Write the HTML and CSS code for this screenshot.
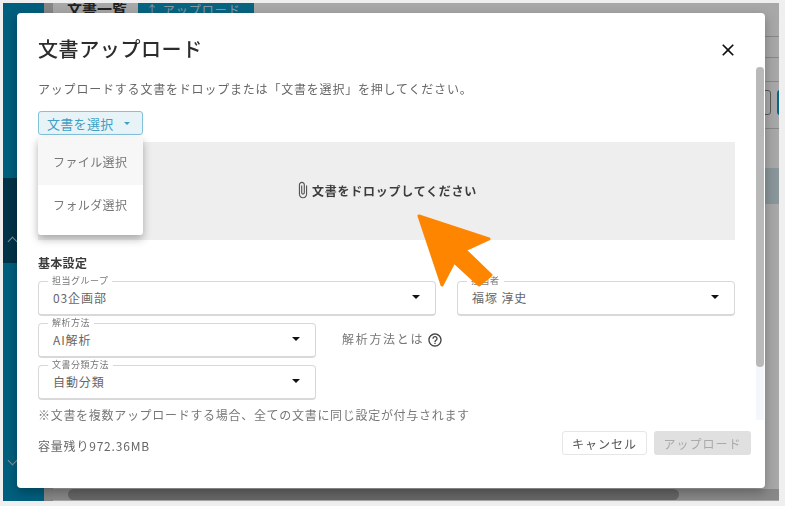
FILE: index.html
```html
<!DOCTYPE html>
<html lang="ja">
<head>
<meta charset="utf-8">
<title>文書アップロード</title>
<link rel="stylesheet" href="styles.css">
</head>
<body>
<div class="shot">
  <div class="app">
    <aside class="side">
      <div class="side-top"></div>
      <div class="side-dark"><span class="chev chev-up"></span></div>
      <div class="side-rest"><span class="chev chev-down"></span></div>
    </aside>
    <div class="rail"></div>
    <main class="main">
      <div class="page-head">
        <span class="page-title">文書一覧</span>
        <span class="page-btn">↑ アップロード</span>
      </div>
      <div class="page-lines">
        <div class="line line-a"></div>
        <div class="line line-b"></div>
        <div class="line line-c"></div>
        <div class="line line-d">
          <span class="mini mini-a"></span>
          <span class="mini mini-b"></span>
        </div>
        <div class="row-hi"></div>
      </div>
      <div class="page-scroll"><div class="page-thumb"></div></div>
    </main>
  </div>
  <div class="overlay"></div>

  <section class="dialog">
    <div class="dialog-scroll"><div class="dialog-thumb"></div></div>
    <header class="dialog-head">
      <h1 class="dialog-title">文書アップロード</h1>
      <svg class="close" viewBox="0 0 24 24"><path d="M19 6.41L17.59 5 12 10.59 6.41 5 5 6.41 10.59 12 5 17.59 6.41 19 12 13.41 17.59 19 19 17.59 13.41 12z"/></svg>
    </header>
    <div class="dialog-body">
      <p class="desc">アップロードする文書をドロップまたは「文書を選択」を押してください。</p>
      <div class="picker">
        <button class="pick-btn">文書を選択<span class="caret caret-blue"></span></button>
        <ul class="menu">
          <li class="menu-item menu-item-hover">ファイル選択</li>
          <li class="menu-item">フォルダ選択</li>
        </ul>
      </div>
      <div class="drop">
        <svg class="clip" viewBox="6 0 13 24"><path d="M16.5 6v11.5c0 2.21-1.79 4-4 4s-4-1.79-4-4V5c0-1.38 1.12-2.5 2.5-2.5s2.5 1.12 2.5 2.5v10.5c0 .55-.45 1-1 1s-1-.45-1-1V6H10v9.5c0 1.38 1.12 2.5 2.5 2.5s2.5-1.12 2.5-2.5V5c0-2.21-1.79-4-4-4S7 2.79 7 5v12.5c0 3.04 2.46 5.5 5.5 5.5s5.5-2.46 5.5-5.5V6h-1.5z"/></svg>
        <span class="drop-text">文書をドロップしてください</span>
      </div>
      <h2 class="section">基本設定</h2>
      <div class="fields">
        <div class="field-row">
          <div class="field field-group"><span class="field-label">担当グループ</span><span class="field-value">03企画部</span><span class="caret"></span></div>
          <div class="field field-owner"><span class="field-label">担当者</span><span class="field-value">福塚 淳史</span><span class="caret"></span></div>
        </div>
        <div class="field-row">
          <div class="field field-half"><span class="field-label">解析方法</span><span class="field-value">AI解析</span><span class="caret"></span></div>
          <div class="help">
            <span class="help-text">解析方法とは</span>
            <svg class="help-icon" viewBox="0 0 24 24"><path d="M11 18h2v-2h-2v2zm1-16C6.48 2 2 6.48 2 12s4.48 10 10 10 10-4.48 10-10S17.52 2 12 2zm0 18c-4.41 0-8-3.59-8-8s3.59-8 8-8 8 3.59 8 8-3.59 8-8 8zm0-14c-2.21 0-4 1.79-4 4h2c0-1.1.9-2 2-2s2 .9 2 2c0 2-3 1.75-3 5h2c0-2.25 3-2.5 3-5 0-2.21-1.79-4-4-4z"/></svg>
          </div>
        </div>
        <div class="field-row">
          <div class="field field-half"><span class="field-label">文書分類方法</span><span class="field-value">自動分類</span><span class="caret"></span></div>
        </div>
      </div>
      <p class="note">※文書を複数アップロードする場合、全ての文書に同じ設定が付与されます</p>
    </div>
    <footer class="dialog-foot">
      <span class="capacity">容量残り972.36MB</span>
      <div class="actions">
        <button class="btn btn-cancel">キャンセル</button>
        <button class="btn btn-upload">アップロード</button>
      </div>
    </footer>
  </section>

  <svg class="arrow" viewBox="0 0 785 506"><polygon points="419,216 489,239 465,250 491,275 479,285 454,262 442,285"/></svg>
</div>
</body>
</html>
```
FILE: styles.css
```css
* { box-sizing: border-box; }
html, body { margin: 0; padding: 0; }
body {
  width: 785px;
  height: 506px;
  overflow: hidden;
  background: #efefef;
  font-family: "Noto Sans CJK JP", "Noto Sans", sans-serif;
  color: #555;
}
.shot {
  position: relative;
  width: 785px;
  height: 506px;
  padding: 3px 6px 5px 3px;
  filter: blur(0.6px);
}
.app {
  display: flex;
  height: 100%;
  background: #fff;
  overflow: hidden;
}
.side {
  width: 41px;
  display: flex;
  flex-direction: column;
  background: #0091bf;
}
.side-top { height: 175px; }
.side-dark {
  height: 85px;
  background: #004e70;
  display: flex;
  align-items: flex-end;
  padding: 0 0 18px;
}
.side-rest {
  flex: 1;
  padding-top: 194px;
}
.chev {
  display: block;
  width: 7px;
  height: 7px;
  margin-left: 6px;
  transform: rotate(45deg);
  border-color: #c9dde4;
  border-style: solid;
  border-width: 0;
}
.chev-up { border-top-width: 1.5px; border-left-width: 1.5px; }
.chev-down { border-bottom-width: 1.5px; border-right-width: 1.5px; }
.rail { width: 9px; background: #cecece; }
.main {
  flex: 1;
  display: flex;
  flex-direction: column;
  min-width: 0;
}
.page-head {
  height: 33px;
  display: flex;
  gap: 8px;
  padding: 0 0 0 14px;
  align-items: flex-start;
}
.page-title {
  font-size: 15px;
  font-weight: 700;
  line-height: 20px;
  color: #333;
  width: 63px;
  margin-top: -4px;
}
.page-btn {
  width: 116px;
  height: 22px;
  margin-top: -4px;
  padding: 2px 0 0 8px;
  background: #0d9ac6;
  color: #cdeaf4;
  font-size: 12px;
  letter-spacing: 1px;
}
.page-lines {
  flex: 1;
  position: relative;
  display: flex;
  flex-direction: column;
}
.line { border-bottom: 1px solid #cfcfcf; }
.line-a { height: 1px; }
.line-b { height: 21px; }
.line-c { height: 24px; }
.line-d {
  height: 47px;
  display: flex;
  gap: 6px;
  justify-content: flex-end;
  padding-top: 8px;
}
.mini { display: block; flex: none; width: 10px; height: 25px; border: 1px solid #888; border-radius: 3px; background: #fff; }
.mini-b { border: 2px solid #0d9ac6; margin-right: -8px; }
.row-hi { height: 36px; margin-top: 39px; background: #d1e4ea; }
.page-scroll {
  height: 11px;
  margin-bottom: 1px;
  background: #cfcfcf;
}
.page-thumb {
  width: 611px;
  height: 100%;
  margin-left: 15px;
  border-radius: 6px;
  background: #9c9c9c;
}
.overlay {
  position: absolute;
  inset: 3px 6px 5px 3px;
  background: rgba(0, 0, 0, 0.34);
}
.dialog {
  position: absolute;
  left: 17px;
  top: 13px;
  width: 748px;
  height: 475px;
  background: #fff;
  border-radius: 4px;
  box-shadow: 0 4px 12px rgba(0, 0, 0, 0.3);
  display: flex;
  flex-direction: column;
}
.dialog-scroll {
  position: absolute;
  right: 1px;
  top: 54px;
  width: 8px;
  height: 353px;
  background: #f3f6fa;
}
.dialog-thumb {
  height: 300px;
  border-radius: 4px;
  background: #b9b9b9;
}
.dialog-head {
  height: 67px;
  padding: 21px 27px 0 21px;
  display: flex;
  justify-content: space-between;
  align-items: flex-start;
}
.dialog-title {
  margin: 0;
  font-size: 20px;
  font-weight: 500;
  line-height: 30px;
  letter-spacing: 0.6px;
  color: #2c2c2c;
}
.close { width: 20px; height: 20px; margin-top: 6px; fill: #111; }
.dialog-body {
  padding: 0 30px 0 21px;
  display: flex;
  flex-direction: column;
}
.desc {
  margin: 0;
  font-size: 12px;
  line-height: 18px;
  letter-spacing: 0.8px;
  color: #666;
}
.picker {
  position: relative;
  margin-top: 13px;
  height: 24px;
}
.pick-btn {
  width: 105px;
  height: 24px;
  padding: 0 0 0 8px;
  display: flex;
  align-items: center;
  font: inherit;
  font-size: 13px;
  letter-spacing: 0.3px;
  color: #3f9fc4;
  background: #e8f3f8;
  border: 1px solid #82c2da;
  border-radius: 3px;
}
.menu {
  position: absolute;
  z-index: 2;
  left: 0;
  top: 26px;
  width: 105px;
  height: 98px;
  margin: 0;
  padding: 0;
  list-style: none;
  background: #fff;
  border-radius: 3px;
  box-shadow: 0 4px 8px rgba(0, 0, 0, 0.3);
}
.menu-item {
  height: 43px;
  padding-left: 15px;
  font-size: 12px;
  line-height: 39px;
  letter-spacing: 0.4px;
  color: #777;
}
.menu-item-hover { height: 48px; line-height: 50px; background: #f7f7f7; }
.caret {
  display: block;
  flex: none;
  width: 0;
  height: 0;
  border-left: 4px solid transparent;
  border-right: 4px solid transparent;
  border-top: 4px solid #111;
}
.caret-blue {
  margin-left: 10px;
  border-left-width: 3px;
  border-right-width: 3px;
  border-top: 3px solid #3f9fc4;
}
.drop {
  margin-top: 7px;
  height: 98px;
  padding: 0 0 2px 2px;
  background: #eee;
  display: flex;
  align-items: center;
  justify-content: center;
  gap: 4px;
}
.clip { width: 10px; height: 18px; fill: #555; }
.drop-text { font-size: 12px; font-weight: 700; letter-spacing: 0.75px; color: #3c3c3c; }
.section {
  margin: 14px 0 0;
  font-size: 12px;
  font-weight: 700;
  line-height: 17px;
  letter-spacing: 0.3px;
  color: #3c3c3c;
}
.fields {
  margin-top: 10px;
  display: flex;
  flex-direction: column;
  gap: 7px;
}
.field-row { display: flex; gap: 21px; align-items: flex-start; }
.field {
  position: relative;
  height: 35px;
  padding: 0 15px 2px 14px;
  display: flex;
  align-items: center;
  justify-content: space-between;
  border: 1px solid #d8d8d8;
  border-bottom-width: 2px;
  border-radius: 4px;
  background: #fff;
}
.field-group { width: 398px; }
.field-owner { width: 278px; }
.field-half { width: 278px; }
.field-label {
  position: absolute;
  left: 9px;
  top: -7px;
  padding: 0 4px;
  background: #fff;
  font-size: 9px;
  line-height: 12px;
  letter-spacing: 0.5px;
  color: #777;
}
.field-value { font-size: 12px; letter-spacing: 0.9px; color: #666; }
.help {
  display: flex;
  align-items: center;
  gap: 3px;
  margin: 6px 0 0 5px;
}
.help-text { font-size: 12px; letter-spacing: 1.7px; color: #777; }
.help-icon { width: 16px; height: 16px; fill: #444; margin-top: 3px; }
.note {
  margin: 6px 0 0;
  font-size: 12px;
  line-height: 18px;
  letter-spacing: 0.7px;
  color: #777;
}
.dialog-foot {
  margin-top: 7px;
  padding: 0 14px 0 21px;
  display: flex;
  justify-content: space-between;
  align-items: flex-start;
}
.capacity {
  margin-top: 6px;
  font-size: 12px;
  line-height: 18px;
  letter-spacing: 0.8px;
  color: #666;
}
.actions { display: flex; gap: 7px; }
.btn {
  height: 24px;
  padding: 0;
  font: inherit;
  font-size: 12px;
  letter-spacing: 1px;
  border-radius: 3px;
}
.btn-cancel { width: 85px; background: #fff; border: 1px solid #e6e6e6; color: #555; }
.btn-upload { width: 97px; background: #e0e0e0; border: 0; color: #aaa; }
.arrow {
  position: absolute;
  left: 0;
  top: 0;
  width: 785px;
  height: 506px;
  pointer-events: none;
}
.arrow polygon {
  fill: #fd8500;
  stroke: #fd8500;
  stroke-width: 3;
  stroke-linejoin: round;
}
```
